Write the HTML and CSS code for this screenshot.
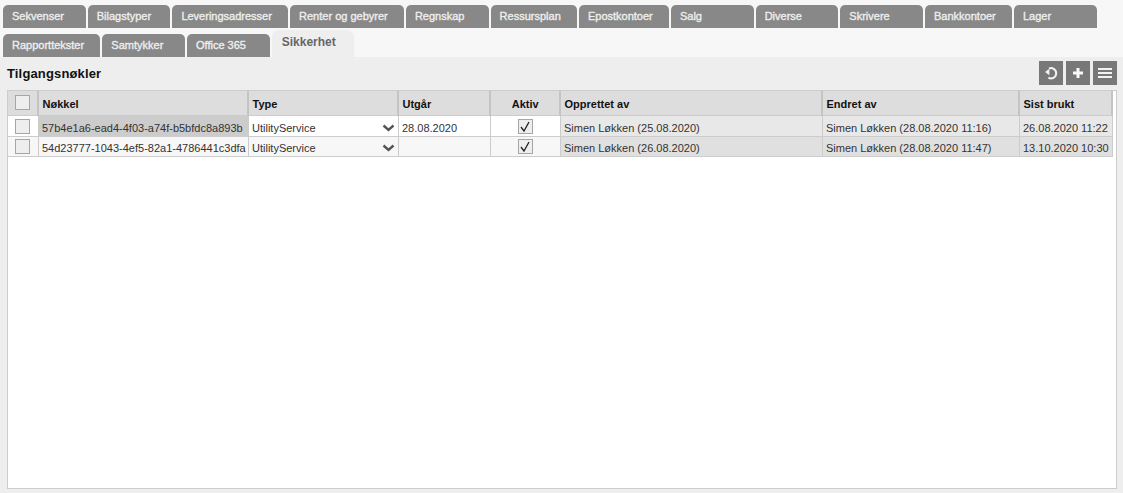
FILE: index.html
```html
<!DOCTYPE html>
<html lang="no">
<head>
<meta charset="utf-8">
<title>Tilgangsnøkler</title>
<link rel="stylesheet" href="styles.css">
</head>
<body>
<nav class="tabs">
  <a class="tab">Sekvenser</a>
  <a class="tab">Bilagstyper</a>
  <a class="tab">Leveringsadresser</a>
  <a class="tab">Renter og gebyrer</a>
  <a class="tab">Regnskap</a>
  <a class="tab">Ressursplan</a>
  <a class="tab">Epostkontoer</a>
  <a class="tab">Salg</a>
  <a class="tab">Diverse</a>
  <a class="tab">Skrivere</a>
  <a class="tab">Bankkontoer</a>
  <a class="tab">Lager</a>
  <a class="tab">Rapporttekster</a>
  <a class="tab">Samtykker</a>
  <a class="tab">Office 365</a>
  <a class="tab active">Sikkerhet</a>
</nav>
<main class="panel">
  <header class="toolbar">
    <h1 class="title">Tilgangsnøkler</h1>
    <div class="actions">
      <button class="btn" aria-label="Oppdater">
        <svg width="16" height="16" viewBox="0 0 16 16"><path d="M6 3.6A5.1 5.1 0 1 1 5.4 12.6" fill="none" stroke="#f2f2f2" stroke-width="2"/><path d="M2 7 6.4 3.8V10.2Z" fill="#f2f2f2"/></svg>
      </button>
      <button class="btn" aria-label="Ny">
        <svg width="16" height="16" viewBox="0 0 16 16"><path d="M8 3v10M3 8h10" stroke="#f8f8f8" stroke-width="3"/></svg>
      </button>
      <button class="btn" aria-label="Meny">
        <svg width="16" height="16" viewBox="0 0 16 16"><path d="M1 4h14M1 8h14M1 12h14" stroke="#f2f2f2" stroke-width="2"/></svg>
      </button>
    </div>
  </header>
  <section class="grid-box">
    <table class="grid">
      <colgroup>
        <col class="c-sel"><col class="c-key"><col class="c-type"><col class="c-exp"><col class="c-act"><col class="c-by"><col class="c-mod"><col class="c-last">
      </colgroup>
      <thead>
        <tr>
          <th class="center"><span class="box"></span></th>
          <th>Nøkkel</th>
          <th>Type</th>
          <th>Utgår</th>
          <th class="mid">Aktiv</th>
          <th>Opprettet av</th>
          <th>Endret av</th>
          <th>Sist brukt</th>
        </tr>
      </thead>
      <tbody>
        <tr class="odd">
          <td class="center"><span class="box"></span></td>
          <td class="focus">57b4e1a6-ead4-4f03-a74f-b5bfdc8a893b</td>
          <td><div class="select">UtilityService<svg class="chev" width="13" height="8" viewBox="0 0 13 8"><path d="M1.5 1.5 6.5 6 11.5 1.5" fill="none" stroke="#555" stroke-width="2.4"/></svg></div></td>
          <td>28.08.2020</td>
          <td class="center"><span class="box"><svg width="13" height="13" viewBox="0 0 13 13"><path d="M2 7 5 11 10 2" fill="none" stroke="#222" stroke-width="1.3"/></svg></span></td>
          <td class="ro">Simen Løkken (25.08.2020)</td>
          <td class="ro">Simen Løkken (28.08.2020 11:16)</td>
          <td class="ro">26.08.2020 11:22</td>
        </tr>
        <tr class="even">
          <td class="center"><span class="box"></span></td>
          <td>54d23777-1043-4ef5-82a1-4786441c3dfa</td>
          <td><div class="select">UtilityService<svg class="chev" width="13" height="8" viewBox="0 0 13 8"><path d="M1.5 1.5 6.5 6 11.5 1.5" fill="none" stroke="#555" stroke-width="2.4"/></svg></div></td>
          <td></td>
          <td class="center"><span class="box"><svg width="13" height="13" viewBox="0 0 13 13"><path d="M2 7 5 11 10 2" fill="none" stroke="#222" stroke-width="1.3"/></svg></span></td>
          <td class="ro">Simen Løkken (26.08.2020)</td>
          <td class="ro">Simen Løkken (28.08.2020 11:47)</td>
          <td class="ro">13.10.2020 10:30</td>
        </tr>
      </tbody>
    </table>
  </section>
</main>
</body>
</html>
```

FILE: styles.css
```css
* { box-sizing: border-box; }
html, body { height: 100%; }
body {
  margin: 0;
  background: #f7f7f7;
  font-family: "Liberation Sans", Arial, sans-serif;
  font-size: 11px;
  color: #222;
  display: flex;
  flex-direction: column;
  overflow: hidden;
}
.tabs {
  display: flex;
  flex-wrap: wrap;
  align-items: flex-end;
  gap: 6px 2px;
  padding: 5px 0 0 3px;
}
.tab {
  height: 23px;
  min-width: 82.7px;
  padding: 5px 16.2px 0 9px;
  background: #888;
  color: #eee;
  font-weight: normal;
  font-size: 11px;
  line-height: 13px;
  -webkit-text-stroke: 0.35px #eee;
  border-radius: 5px 5px 0 0;
}
.tab.active {
  height: 27px;
  margin-top: -4px;
  background: #eee;
  color: #666;
  font-size: 12px;
  font-weight: bold;
  -webkit-text-stroke: 0;
  padding: 6px 16px 0 10px;
  border-radius: 7px 7px 0 0;
}
.panel {
  flex: 1;
  min-height: 0;
  background: #eee;
  padding: 0 6px 4px 7px;
  display: flex;
  flex-direction: column;
}
.toolbar {
  height: 33px;
  display: flex;
  align-items: flex-start;
  justify-content: space-between;
}
.title {
  margin: 9px 0 0;
  font-size: 13px;
  line-height: 15px;
  font-weight: bold;
  letter-spacing: 0.15px;
  color: #111;
}
.actions {
  display: flex;
  gap: 3px;
  margin-top: 4px;
}
.btn {
  width: 24px;
  height: 24px;
  padding: 0;
  border: 0;
  background: #787878;
  display: flex;
  align-items: center;
  justify-content: center;
}
.grid-box {
  flex: 1;
  min-height: 0;
  background: #fff;
  border: 1px solid #ccc;
}
.grid {
  table-layout: fixed;
  border-collapse: collapse;
  width: 1104px;
  font-size: 11px;
  color: #333;
}
.c-sel { width: 30px; }
.c-key { width: 210px; }
.c-type { width: 150px; }
.c-exp { width: 92px; }
.c-act { width: 70px; }
.c-by { width: 262px; }
.c-mod { width: 197px; }
.c-last { width: 93px; }
.grid th {
  height: 24px;
  padding: 2px 3px 0 3.5px;
  background: #ddd;
  border-right: 2px solid #c4c4c4;
  border-bottom: 1px solid #ccc;
  text-align: left;
  font-weight: bold;
  color: #111;
  white-space: nowrap;
}
.grid td {
  height: 20px;
  padding: 4px 3px 0 3.5px;
  border-right: 1px solid #ccc;
  border-bottom: 1px solid #ccc;
  white-space: nowrap;
  overflow: hidden;
}
.grid th.mid { text-align: center; }
.grid .center { text-align: center; padding: 0; }
.grid .odd td.center { padding: 2px 0 0; }
.grid .even td.center { padding: 1px 0 0; }
.odd td { background: #fff; height: 21px; }
.even td { background: #f7f7f7; }
.odd td.ro { background: #e8e8e8; }
.even td.ro { background: #e0e0e0; }
.odd td.focus { background: #ccc; }
.box {
  display: inline-flex;
  align-items: center;
  justify-content: center;
  width: 15px;
  height: 15px;
  background: #eee;
  border: 1px solid #a6a6a6;
  vertical-align: middle;
}
.select {
  display: flex;
  align-items: center;
  justify-content: space-between;
}
```
